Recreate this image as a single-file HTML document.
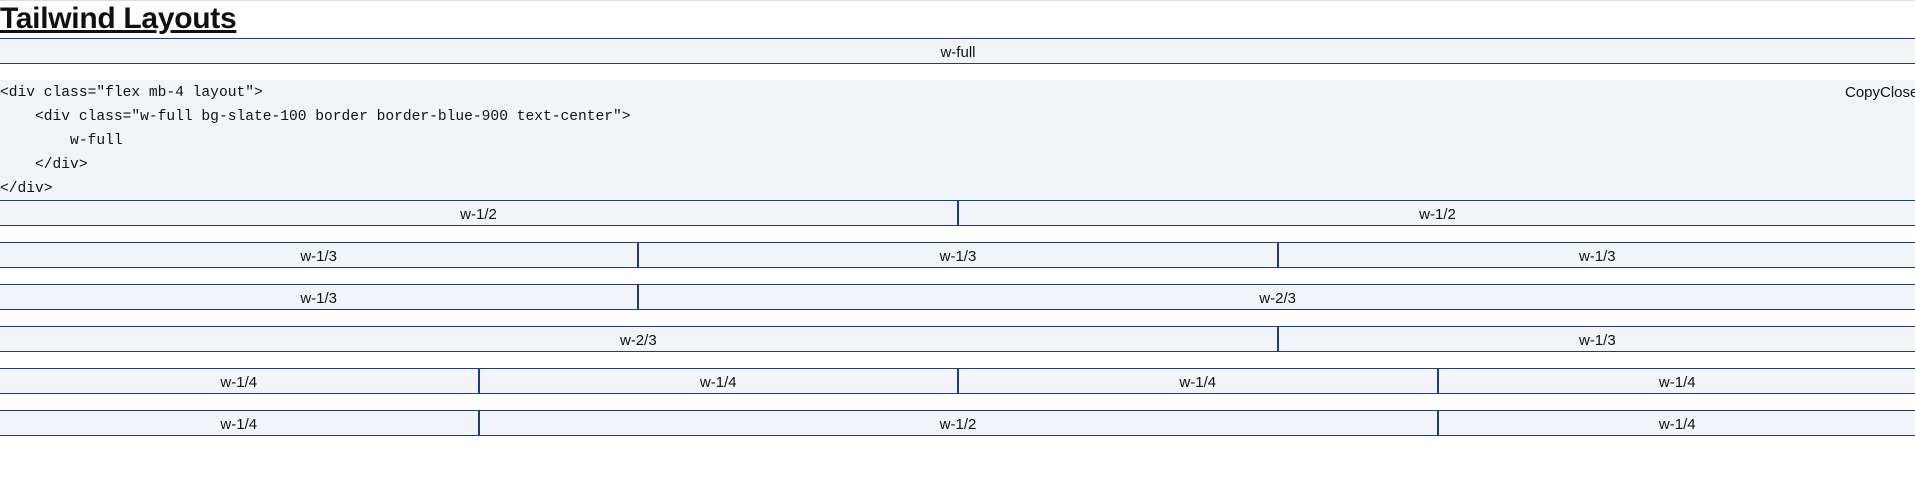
<!DOCTYPE html>
<html><head><style>
html,body{margin:0;padding:0;background:#fff;width:1915px;height:493px;overflow:hidden}
body{font-family:"Liberation Sans",sans-serif;font-size:15px;color:#111;border-top:1px solid #ddd;box-sizing:border-box}
h1{margin:0;font-size:30px;font-weight:bold;text-decoration:underline;line-height:36px;height:37px;letter-spacing:-0.3px}
.layout{display:flex;margin-bottom:16px;width:1918px;margin-left:-1px}
.layout>div{background:#f1f5f9;border:1px solid #1e3a8a;text-align:center;height:26px;line-height:27px;box-sizing:border-box}
.f{width:100%}.h{width:50%}.t{width:33.333%}.tt{width:66.667%}.q{width:25%}
pre{margin:0;background:#f1f5f9;font-family:"Liberation Mono",monospace;font-size:14.6px;line-height:24px;height:120px;position:relative;color:#111;padding-top:1px;box-sizing:border-box}
.cc{position:absolute;left:1845px;top:1px;font-family:"Liberation Sans",sans-serif;font-size:15px;line-height:24px}
</style></head><body>
<h1>Tailwind Layouts</h1>
<div class="layout"><div class="f">w-full</div></div>
<pre>&lt;div class="flex mb-4 layout"&gt;
    &lt;div class="w-full bg-slate-100 border border-blue-900 text-center"&gt;
        w-full
    &lt;/div&gt;
&lt;/div&gt;<span class="cc">CopyClose</span></pre>
<div class="layout"><div class="h">w-1/2</div><div class="h">w-1/2</div></div>
<div class="layout"><div class="t">w-1/3</div><div class="t">w-1/3</div><div class="t">w-1/3</div></div>
<div class="layout"><div class="t">w-1/3</div><div class="tt">w-2/3</div></div>
<div class="layout"><div class="tt">w-2/3</div><div class="t">w-1/3</div></div>
<div class="layout"><div class="q">w-1/4</div><div class="q">w-1/4</div><div class="q">w-1/4</div><div class="q">w-1/4</div></div>
<div class="layout"><div class="q">w-1/4</div><div class="h">w-1/2</div><div class="q">w-1/4</div></div>
</body></html>
